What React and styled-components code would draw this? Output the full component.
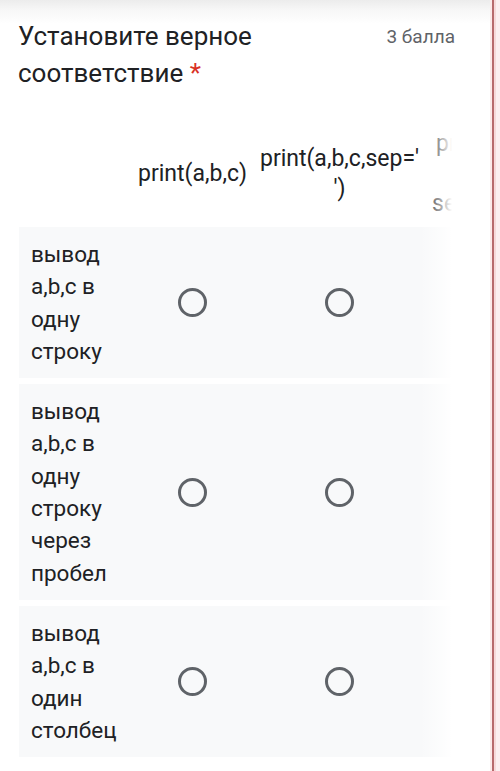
import React from "react";
import styled, { createGlobalStyle } from "styled-components";

const Global = createGlobalStyle`
  html, body { margin: 0; padding: 0; }
  body {
    background: #fbeff0;
    font-family: Roboto, "Noto Sans", Arial, sans-serif;
    color: #202124;
  }
`;

const Page = styled.div`
  display: flex;
  width: 500px;
  height: 771px;
  overflow: hidden;
`;

const Card = styled.div`
  width: 494px;
  flex: none;
  background: linear-gradient(to bottom, #ececec 0px, #f7f7f7 10px, #ffffff 24px);
  border-right: 2px solid #b76a6d;
  box-shadow: 2px 0 0 #f6d9da, inset -2px 0 0 #fbeaea;
  padding: 18px 0 0 18px;
  box-sizing: border-box;
`;

const Head = styled.div`
  display: flex;
  justify-content: space-between;
  align-items: flex-start;
  padding-right: 37px;
`;

const Title = styled.div`
  font-size: 26px;
  line-height: 37px;
  color: #202124;
  width: 300px;
`;

const Star = styled.span`
  color: #d93025;
`;

const Points = styled.div`
  font-size: 19px;
  line-height: 37px;
  color: #5f6368;
`;

const TableWrap = styled.div`
  position: relative;
  margin-top: 35px;
  margin-left: 1px;
  width: 433px;
  overflow: hidden;
`;

const Fade = styled.div`
  position: absolute;
  top: 0;
  right: 0;
  bottom: 0;
  width: 32px;
  background: linear-gradient(to right, rgba(255, 255, 255, 0), rgba(255, 255, 255, 0.55) 60%, #ffffff);
  pointer-events: none;
`;

const GridRow = styled.div`
  display: grid;
  grid-template-columns: 100px 147px 147px 147px;
  width: 541px;
  align-items: center;
  background: ${(p) => (p.$header ? "transparent" : "#f8f9fa")};
  margin-bottom: 6px;
  min-height: ${(p) => (p.$header ? "94px" : "0")};
`;

const ColHead = styled.div`
  display: flex;
  flex-direction: column;
  align-items: center;
  font-size: 23px;
  line-height: 30px;
  color: #202124;
`;

const HeadLine = styled.span`
  white-space: nowrap;
`;

const Label = styled.div`
  font-size: 22.5px;
  line-height: 32.3px;
  color: #202124;
  padding: 11px 0 11px 12px;
  white-space: nowrap;
`;

const Cell = styled.div`
  display: flex;
  justify-content: center;
  align-items: center;
`;

const Radio = styled.span`
  display: block;
  width: 29px;
  height: 29px;
  box-sizing: border-box;
  border: 3px solid #5f6368;
  border-radius: 50%;
`;

const columns = [
  ["print(a,b,c)"],
  ["print(a,b,c,sep='", "')"],
  ["print(a,b,c", "end='')", "sep='\\n\\n')"],
];

const rows = [
  ["вывод", "a,b,c в", "одну", "строку"],
  ["вывод", "a,b,c в", "одну", "строку", "через", "пробел"],
  ["вывод", "a,b,c в", "один", "столбец"],
];

export default function App() {
  return (
    <>
      <Global />
      <Page>
        <Card>
          <Head>
            <Title>
              Установите верное соответствие <Star>*</Star>
            </Title>
            <Points>3 балла</Points>
          </Head>
          <TableWrap>
            <GridRow $header>
              <div />
              {columns.map((lines, i) => (
                <ColHead key={i}>
                  {lines.map((l, j) => (
                    <HeadLine key={j}>{l}</HeadLine>
                  ))}
                </ColHead>
              ))}
            </GridRow>
            {rows.map((lines, i) => (
              <GridRow key={i}>
                <Label>
                  {lines.map((l, j) => (
                    <React.Fragment key={j}>
                      {l}
                      {j < lines.length - 1 && <br />}
                    </React.Fragment>
                  ))}
                </Label>
                <Cell>
                  <Radio />
                </Cell>
                <Cell>
                  <Radio />
                </Cell>
                <Cell>
                  <Radio />
                </Cell>
              </GridRow>
            ))}
            <Fade />
          </TableWrap>
        </Card>
      </Page>
    </>
  );
}
